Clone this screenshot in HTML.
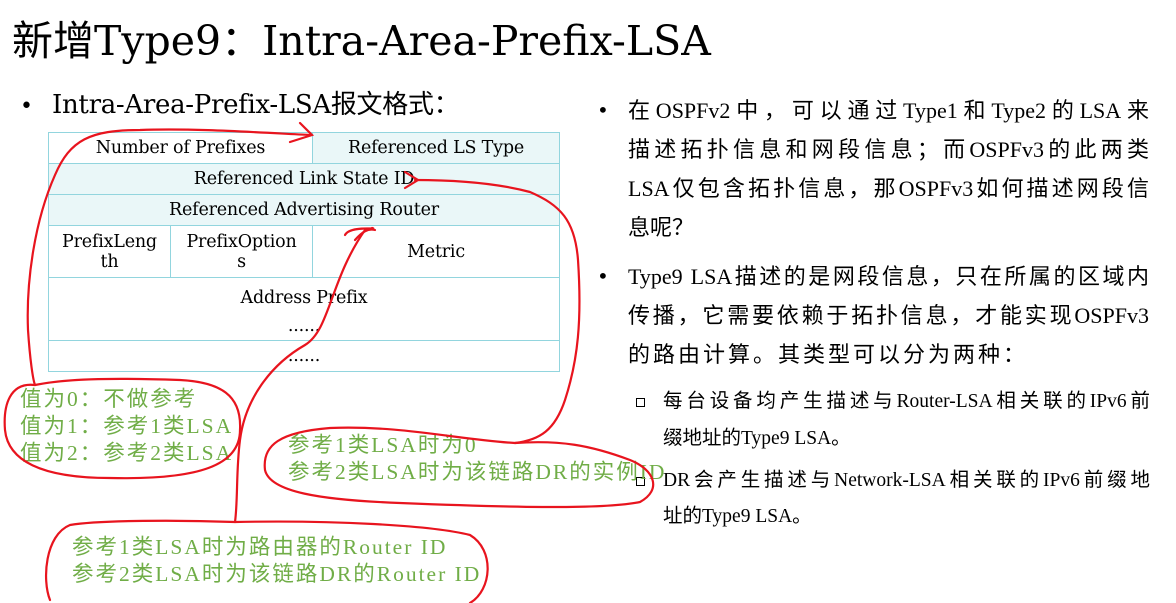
<!DOCTYPE html>
<html><head><meta charset="utf-8"><style>
*{margin:0;padding:0}
body{width:1176px;height:603px;background:#fff;position:relative;overflow:hidden;font-family:"DejaVu Serif","Noto Sans CJK SC",serif;color:#000}
.a{position:absolute;white-space:nowrap}
.j{position:absolute;white-space:nowrap;font-size:22px;font-family:"Liberation Serif","Noto Sans CJK SC",serif;text-align:justify;text-align-last:justify;width:521px;left:628px}
.s{position:absolute;font-size:19.5px;font-family:"Liberation Serif","Noto Sans CJK SC",serif;white-space:nowrap;text-align:justify;text-align-last:justify;width:487px;left:663px}
.g{color:#70ad47;font-size:21.5px;letter-spacing:2px;font-family:"Liberation Serif","Noto Sans CJK SC",serif;position:absolute;white-space:nowrap;line-height:27px}
table{position:absolute;left:48px;top:132px;border-collapse:collapse;width:512px;font-size:17.5px;font-family:"DejaVu Serif","Liberation Serif",serif;letter-spacing:-0.2px}
td{border:1px solid #92d5de;text-align:center;line-height:20px;padding:0}
.b{background:#eaf7f8}
</style></head><body>
<div class="a" style="left:12px;top:7px;font-size:41px">新增Type9：Intra-Area-Prefix-LSA</div>
<div class="a" style="left:20px;top:94px;font-size:22px">•</div>
<div class="a" style="left:52px;top:84px;font-size:26px;letter-spacing:-0.3px">Intra-Area-Prefix-LSA报文格式：</div>
<table>
<tr style="height:31px"><td colspan="2">Number of Prefixes</td><td class="b" style="width:246px">Referenced LS Type</td></tr>
<tr style="height:31px" class="b"><td colspan="3">Referenced Link State ID</td></tr>
<tr style="height:31px" class="b"><td colspan="3">Referenced Advertising Router</td></tr>
<tr style="height:52px"><td style="width:121px">PrefixLeng<br>th</td><td style="width:141px">PrefixOption<br>s</td><td>Metric</td></tr>
<tr style="height:62px"><td colspan="3" style="vertical-align:top;padding-top:6px;line-height:28px">Address Prefix<br>......</td></tr>
<tr style="height:31px"><td colspan="3">......</td></tr>
</table>
<div class="a" style="left:597px;top:98px;font-size:20px">•</div>
<div class="j" style="top:93px">在OSPFv2中，可以通过Type1和Type2的LSA来</div>
<div class="j" style="top:132px">描述拓扑信息和网段信息；而OSPFv3的此两类</div>
<div class="j" style="top:171px">LSA仅包含拓扑信息，那OSPFv3如何描述网段信</div>
<div class="j" style="top:210px;text-align-last:left">息呢？</div>
<div class="a" style="left:597px;top:264px;font-size:20px">•</div>
<div class="j" style="top:259px">Type9 LSA描述的是网段信息，只在所属的区域内</div>
<div class="j" style="top:298px">传播，它需要依赖于拓扑信息，才能实现OSPFv3</div>
<div class="j" style="top:337px;text-align-last:left;letter-spacing:3px">的路由计算。其类型可以分为两种：</div>
<div class="a" style="left:636px;top:398px;width:7px;height:7px;border:1px solid #000"></div>
<div class="s" style="top:384px">每台设备均产生描述与Router-LSA相关联的IPv6前</div>
<div class="s" style="top:421px;text-align-last:left">缀地址的Type9 LSA。</div>
<div class="a" style="left:636px;top:477px;width:7px;height:7px;border:1px solid #000"></div>
<div class="s" style="top:463px">DR会产生描述与Network-LSA相关联的IPv6前缀地</div>
<div class="s" style="top:499px;text-align-last:left">址的Type9 LSA。</div>
<div class="g" style="left:20px;top:386px">值为0：不做参考<br>值为1：参考1类LSA<br>值为2：参考2类LSA</div>
<div class="g" style="left:288px;top:432px">参考1类LSA时为0<br>参考2类LSA时为该链路DR的实例ID</div>
<div class="g" style="left:72px;top:534px">参考1类LSA时为路由器的Router ID<br>参考2类LSA时为该链路DR的Router ID</div>
<svg class="a" style="left:0;top:0" width="1176" height="603" fill="none" stroke="#e8141e" stroke-width="2.2" stroke-linecap="round">
<path d="M300 123 L312 135 L290 142"/>
<path d="M310 135 C250 132 190 128 140 130 C90 130 70 140 55 175 C35 220 26 280 28 330 C30 360 33 380 35 385"/>
<path d="M35 385 C10 382 3 405 5 430 C8 460 40 478 110 478 C200 480 240 465 240 430 C242 395 220 382 180 380 C120 378 70 378 35 385"/>
<path d="M405 172 L418 180 L405 188"/>
<path d="M415 180 C460 180 500 184 530 192 C560 205 575 220 578 260 C582 320 578 360 565 400 C555 430 540 440 515 443"/>
<path d="M515 443 C460 440 400 425 330 428 C280 432 262 445 265 470 C270 492 320 500 400 503 C500 507 600 510 640 502 C662 490 655 470 630 460 C590 445 560 440 515 443"/>
<path d="M355 240 C362 232 368 228 375 230 M372 228 C380 230 350 225 345 235"/>
<path d="M365 230 C330 280 330 330 305 345 C270 365 245 400 240 440 C236 470 238 500 235 522"/>
<path d="M235 522 C180 520 100 520 70 525 C45 535 42 580 50 600 M235 522 C330 520 430 525 470 535 C495 550 492 590 470 603"/>
</svg>
</body></html>
